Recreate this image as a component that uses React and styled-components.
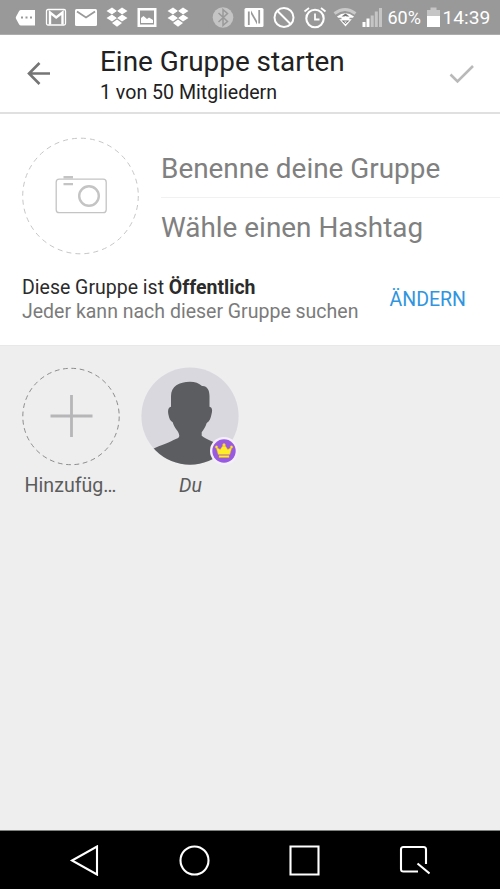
import React from "react"
import styled, { createGlobalStyle } from "styled-components"

const GlobalStyle = createGlobalStyle`
  * {
    box-sizing: border-box;
  }
  body {
    margin: 0;
    font-family: Roboto, "Liberation Sans", sans-serif;
    background: #eeeeee;
  }
  svg {
    display: block;
    flex: none;
  }
`

const Screen = styled.div`
  display: flex;
  flex-direction: column;
  width: 500px;
  height: 889px;
  overflow: hidden;
`

const StatusBar = styled.div`
  display: flex;
  align-items: center;
  height: 35px;
  padding: 1px 0 0 10px;
  background: #999999;
  border-bottom: 1px solid #adadad;
  color: #fff;
`

const IconRow = styled.div`
  display: grid;
  grid-auto-flow: column;
  grid-auto-columns: 30.5px;
  justify-items: center;
  margin-right: ${props => props.gap || 0}px;
`

const StatusText = styled.span`
  padding-top: 1px;
  font-size: ${props => props.size}px;
  line-height: 24px;
  white-space: nowrap;
  width: ${props => props.width}px;
`

const Header = styled.header`
  display: flex;
  align-items: center;
  height: 79px;
  padding: 0 24px;
  background: #fff;
  border-bottom: 2px solid #e0e0e0;
`

const HeaderText = styled.div`
  flex: 1;
  margin-left: 46px;
  padding-top: 5px;
  color: #212121;
  white-space: nowrap;
  h1 {
    margin: 0;
    font-size: 27.9px;
    font-weight: normal;
    line-height: 34px;
  }
  p {
    margin: 0;
    font-size: 19.6px;
    line-height: 28px;
  }
`

const GroupForm = styled.section`
  height: 231px;
  padding: 23px 0 0 22px;
  background: #fff;
`

const FormTop = styled.div`
  display: flex;
`

const Fields = styled.div`
  flex: 1;
  margin-left: 21px;
`

const Field = styled.div`
  height: ${props => (props.last ? 58 : 61)}px;
  line-height: ${props => (props.last ? 60 : 64)}px;
  font-size: 27.9px;
  color: #808080;
  white-space: nowrap;
  border-bottom: ${props => (props.last ? "none" : "1px solid #f1f1f1")};
`

const Privacy = styled.div`
  display: flex;
  align-items: center;
  justify-content: space-between;
  margin-top: 20px;
  padding-right: 34px;
  font-size: 19.5px;
  line-height: 24px;
  white-space: nowrap;
  p {
    margin: 0;
    color: #2b2b2b;
  }
  p + p {
    color: #7b7b7b;
  }
`

const ChangeButton = styled.button`
  padding: 0;
  border: 0;
  background: none;
  font: inherit;
  color: #2f95e0;
`

const Members = styled.section`
  display: flex;
  flex: 1;
  gap: 21px;
  padding: 21px;
  background: #eeeeee;
  border-top: 1px solid #e8e8e8;
`

const Member = styled.div`
  display: flex;
  flex-direction: column;
  align-items: center;
  width: 99px;
`

const MemberName = styled.span`
  margin-top: 8px;
  font-size: 19.6px;
  line-height: 24px;
  font-style: ${props => (props.self ? "italic" : "normal")};
  color: #5c5c5c;
`

const AvatarWrap = styled.div`
  position: relative;
`

const Badge = styled.div`
  position: absolute;
  right: 2px;
  bottom: 1px;
`

const NavBar = styled.nav`
  display: grid;
  grid-template-columns: repeat(4, 110px);
  justify-content: center;
  justify-items: center;
  align-items: center;
  height: 59px;
  padding-right: 1px;
  background: #000;
  border-top: 1px solid #7b837f;
`

const StatusIcon = ({ children }) => (
  <svg width="24" height="24" viewBox="0 0 24 24" fill="none">
    {children}
  </svg>
)

const DropboxIcon = () => (
  <StatusIcon>
    <g fill="#fff">
      <path d="M7 1.500 12 5 7 8.500 1.500 5zM17 1.500 22.500 5 17 8.500 12 5z" />
      <path d="M7 8.500 12 12 7 15.500 1.500 12zM17 8.500 22.500 12 17 15.500 12 12z" />
      <path d="M12 13.500 17 17 12 20.800 7 17z" />
    </g>
    <path d="m12 5.200 4.800 3.300-4.800 3.300-4.800-3.300z" fill="#999" />
  </StatusIcon>
)

const Notifications = () => (
  <IconRow gap={15}>
    <StatusIcon>
      <path
        d="M8 4h14v15.500H8q-1.300 0-2-1.300L3 12.700q-.5-1 0-2L6 5.300Q6.700 4 8 4z"
        fill="#fff"
      />
      <path d="M8 11.500h2M12.500 11.500h2M17 11.500h2" stroke="#999" strokeWidth="2" />
    </StatusIcon>
    <StatusIcon>
      <rect x="2.500" y="3.500" width="19" height="15.500" rx="1.500" stroke="#fff" strokeWidth="1.300" />
      <path d="M6 18.500V6.500l6.200 5 6.300-5v12" stroke="#fff" strokeWidth="2.400" />
    </StatusIcon>
    <StatusIcon>
      <rect x="1" y="3" width="22" height="17" rx="1.500" fill="#fff" />
      <path d="m3 5.500 9 6 9-6" stroke="#999" strokeWidth="1.800" />
    </StatusIcon>
    <DropboxIcon />
    <StatusIcon>
      <path
        d="M2.500 2h19v19h-19zM5 4.500v14h14v-14z"
        fill="#fff"
        fillRule="evenodd"
      />
      <path d="M6 17v-5l2.500-2 3.500 3 2-1.500 4 2.500v3z" fill="#fff" />
    </StatusIcon>
    <DropboxIcon />
  </IconRow>
)

const SystemIcons = () => (
  <IconRow>
    <StatusIcon>
      <circle cx="12" cy="11.500" r="10.300" fill="#c4c4c4" />
      <path d="m7.500 7 9 8.500-4.500 3.800V3.700l4.500 3.800-9 8.500" stroke="#999" strokeWidth="1.500" />
    </StatusIcon>
    <StatusIcon>
      <rect x="2.500" y="2" width="19" height="19" rx="1.500" fill="#fff" />
      <path d="M6.800 19V5.500M17.200 4v13.500" stroke="#999" strokeWidth="1.800" />
      <path d="M9 4.500 15 15V18.500L9 8z" fill="#999" />
    </StatusIcon>
    <StatusIcon>
      <circle cx="12" cy="11.500" r="9.500" stroke="#fff" strokeWidth="2" />
      <path d="m5.500 5 13 13" stroke="#fff" strokeWidth="2" />
    </StatusIcon>
    <StatusIcon>
      <circle cx="12" cy="12.500" r="8.700" stroke="#fff" strokeWidth="2.100" />
      <path d="M12 7.500v6h4.500M1.500 5.500 6 2M22.500 5.500 18 2" stroke="#fff" strokeWidth="1.800" />
    </StatusIcon>
    <StatusIcon>
      <path d="M1.500 7.500q10.500-8 21 0" stroke="#c9c9c9" strokeWidth="3" />
      <path d="M4 10.500q8.500-6.500 17 0L12.500 20.500z" fill="#fff" />
      <path d="m8.500 10.500 4-3 4 3zM8.500 14.500h8l-4 3.500z" fill="#777" />
      <path d="M4.500 12.500h4M16.500 12.500h4" stroke="#999" strokeWidth="1.300" />
      <path d="m10.500 11.500 2-1.500 2 1.500zM11 15.500h3l-1.500 1.500z" fill="#fff" />
    </StatusIcon>
  </IconRow>
)

const Signal = styled.div`
  width: 27px;
`

const Camera = () => (
  <svg width="118" height="118" viewBox="0 0 118 118" fill="none" stroke="#c4c4c4">
    <circle cx="58.500" cy="59" r="57.800" stroke="#c6c6c6" strokeDasharray="5 4.080" />
    <rect x="34.200" y="42.200" width="50" height="33.500" rx="3" strokeWidth="1.300" />
    <circle cx="67" cy="59" r="9.800" strokeWidth="2.400" />
    <path d="M41.500 40.300h9.500M41.500 47.100h9.500" strokeWidth="2.400" />
  </svg>
)

const AddMember = () => (
  <svg width="99" height="99" viewBox="0 0 99 99" fill="none">
    <circle cx="50" cy="49.500" r="48.200" stroke="#8c8c8c" strokeDasharray="4.800 3.612" />
    <path d="M29.500 49h42M50.500 28v42" stroke="#b6b6b8" strokeWidth="2.800" />
  </svg>
)

const Silhouette = () => (
  <svg width="99" height="99" viewBox="0 0 99 99">
    <clipPath id="avatar">
      <circle cx="49" cy="49.200" r="48.600" />
    </clipPath>
    <g clipPath="url(#avatar)">
      <path d="M0 0h99v99H0z" fill="#d9d8de" />
      <path
        d="M30 39.700V29C30 19.500 38 14.700 49 14.700c5 0 9 1.500 12 4.300 5-.5 7.500 4 7.500 10v10.700c3 .5 3 4 2 7.500-.8 4-1.800 6.800-4.800 8.800-1 4-3.500 7-5 9.300v3.400c5 4 13 6.500 21.300 10.800L92 99H8V84c8-5 19-7.500 24.500-11 3.500-1.500 6-2.500 5.800-4.300-.3-5-4.800-6.500-6.600-13.400-2.500-1.300-3.500-3.800-4.300-7.800-.9-4 0-7.500 2.600-7.800z"
        fill="#5c5d61"
      />
    </g>
  </svg>
)

const Crown = () => (
  <svg width="28" height="28" viewBox="0 0 28 28">
    <circle cx="14" cy="14" r="14" fill="#f5effb" />
    <circle cx="14" cy="14" r="11.700" fill="#985ade" />
    <g fill="#fdee28" stroke="#e6a84f" strokeWidth=".5">
      <path d="m6 10 4.200 2.500L13 8.500h2l2.800 4L22 10l-2.200 7.500H8.200z" />
      <circle cx="14" cy="8" r="1.400" />
      <circle cx="6.500" cy="10" r="1.300" />
      <circle cx="21.500" cy="10" r="1.300" />
      <path d="M9 18.500h10v2H9z" />
    </g>
  </svg>
)

const Navigation = () => (
  <NavBar>
    {[
      <path d="M28 1.500v28L3 15.500z" key="back" />,
      <circle cx="15.500" cy="15.500" r="14" key="home" />,
      <path d="M1.500 1.500h28v28h-28z" key="recent" />,
      <path
        d="M19 26.500H4.500q-2.500 0-2.500-2.500V4.500Q2 2 4.500 2h20Q27 2 27 4.500V19M18.500 18.500l12 10"
        key="capture"
      />,
    ].map(icon => (
      <svg
        key={icon.key}
        width="31"
        height="31"
        viewBox="0 0 31 31"
        fill="none"
        stroke="#fff"
        strokeWidth="2.100"
      >
        {icon}
      </svg>
    ))}
  </NavBar>
)

const App = () => {
  return (
    <>
      <GlobalStyle />
      <Screen>
        <StatusBar>
          <Notifications />
          <SystemIcons />
          <Signal>
            <svg width="22" height="24" viewBox="0 0 22 24">
              <path d="M1.500 16h3v5h-3zM5.500 12.500h3V21h-3z" fill="#fff" />
              <path d="M9.700 9.500h3V21h-3zM13.800 5.500h3V21h-3zM18 2h3v19h-3z" fill="#c5c5c5" />
            </svg>
          </Signal>
          <StatusText size={18} width={39}>60%</StatusText>
          <svg width="16" height="24" viewBox="0 0 16 24">
            <path d="M0 4h3.500V1.500h6V4H13v7H0z" fill="#c5c5c5" />
            <path d="M0 10h13v11H0z" fill="#fff" />
          </svg>
          <StatusText size={19.2} width={50}>14:39</StatusText>
        </StatusBar>
        <Header>
          <svg width="30" height="30" viewBox="0 0 30 30" fill="none">
            <path d="M26 14.500H5.500M15.500 4 5 14.500 15.500 25" stroke="#757575" strokeWidth="2.600" />
          </svg>
          <HeaderText>
            <h1>Eine Gruppe starten</h1>
            <p>1 von 50 Mitgliedern</p>
          </HeaderText>
          <svg width="28" height="28" viewBox="0 0 28 28" fill="none">
            <path d="m2.500 14.500 7 7L25 6" stroke="#b9b9b9" strokeWidth="2.600" />
          </svg>
        </Header>
        <GroupForm>
          <FormTop>
            <Camera />
            <Fields>
              <Field>Benenne deine Gruppe</Field>
              <Field last>Wähle einen Hashtag</Field>
            </Fields>
          </FormTop>
          <Privacy>
            <div>
              <p>
                Diese Gruppe ist <b>Öffentlich</b>
              </p>
              <p>Jeder kann nach dieser Gruppe suchen</p>
            </div>
            <ChangeButton>ÄNDERN</ChangeButton>
          </Privacy>
        </GroupForm>
        <Members>
          <Member>
            <AddMember />
            <MemberName>Hinzufüg…</MemberName>
          </Member>
          <Member>
            <AvatarWrap>
              <Silhouette />
              <Badge>
                <Crown />
              </Badge>
            </AvatarWrap>
            <MemberName self>Du</MemberName>
          </Member>
        </Members>
        <Navigation />
      </Screen>
    </>
  )
}

export default App
